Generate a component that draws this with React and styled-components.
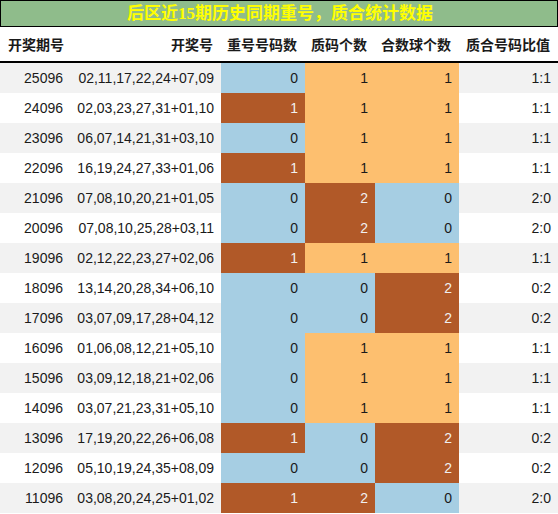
import React from "react";
import styled, { createGlobalStyle } from "styled-components";

const Global = createGlobalStyle`
  html, body { margin: 0; padding: 0; background: #fff; }
  body { width: 558px; }
`;

const Table = styled.div`
  width: 558px;
  font-family: "Liberation Sans", "Noto Sans CJK SC", sans-serif;
  color: #1a1a1a;
`;

const Title = styled.div`
  box-sizing: border-box;
  height: 27px;
  border: 1px solid #000;
  background: #8fbc8b;
  color: #ffff00;
  font-family: "Liberation Serif", "Noto Sans CJK SC", serif;
  font-weight: bold;
  font-size: 17px;
  line-height: 25px;
  text-align: center;
  padding-left: 2px;
`;

const cols = "70px 151px 84px 70px 84px 99px";

const HeaderRow = styled.div`
  display: grid;
  grid-template-columns: ${cols};
  height: 34px;
  border-bottom: 2px solid #000;
  font-family: "Noto Sans CJK SC", sans-serif;
  font-weight: bold;
  font-size: 14px;
  align-items: center;
`;

const HeadCell = styled.div`
  text-align: ${(p) => (p.$left ? "left" : "right")};
  padding: ${(p) => (p.$left ? "0 0 0 8px" : "0 8px 0 0")};
  white-space: nowrap;
`;

const Row = styled.div`
  display: grid;
  grid-template-columns: ${cols};
  height: 30px;
  background: ${(p) => (p.$alt ? "#f2f2f2" : "#ffffff")};
  font-size: 14px;
`;

const palette = {
  blue: { bg: "#a6cee3", fg: "#1a1a1a" },
  brown: { bg: "#b15928", fg: "#f0f0f0" },
  orange: { bg: "#fdbf6f", fg: "#1a1a1a" },
};

const Cell = styled.div`
  display: flex;
  align-items: center;
  justify-content: flex-end;
  padding-right: 7px;
  white-space: nowrap;
  background: ${(p) => (p.$tone ? palette[p.$tone].bg : "transparent")};
  color: ${(p) => (p.$tone ? palette[p.$tone].fg : "#1a1a1a")};
`;

const data = [
  ["25096", "02,11,17,22,24+07,09", 0, 1, 1, "1:1"],
  ["24096", "02,03,23,27,31+01,10", 1, 1, 1, "1:1"],
  ["23096", "06,07,14,21,31+03,10", 0, 1, 1, "1:1"],
  ["22096", "16,19,24,27,33+01,06", 1, 1, 1, "1:1"],
  ["21096", "07,08,10,20,21+01,05", 0, 2, 0, "2:0"],
  ["20096", "07,08,10,25,28+03,11", 0, 2, 0, "2:0"],
  ["19096", "02,12,22,23,27+02,06", 1, 1, 1, "1:1"],
  ["18096", "13,14,20,28,34+06,10", 0, 0, 2, "0:2"],
  ["17096", "03,07,09,17,28+04,12", 0, 0, 2, "0:2"],
  ["16096", "01,06,08,12,21+05,10", 0, 1, 1, "1:1"],
  ["15096", "03,09,12,18,21+02,06", 0, 1, 1, "1:1"],
  ["14096", "03,07,21,23,31+05,10", 0, 1, 1, "1:1"],
  ["13096", "17,19,20,22,26+06,08", 1, 0, 2, "0:2"],
  ["12096", "05,10,19,24,35+08,09", 0, 0, 2, "0:2"],
  ["11096", "03,08,20,24,25+01,02", 1, 2, 0, "2:0"],
];

const repeatTone = (v) => (v === 0 ? "blue" : "brown");
const countTone = (v) => (v === 0 ? "blue" : v === 1 ? "orange" : "brown");

export default function App() {
  return (
    <>
      <Global />
      <Table>
        <Title>后区近15期历史同期重号，质合统计数据</Title>
        <HeaderRow>
          <HeadCell $left>开奖期号</HeadCell>
          <HeadCell>开奖号</HeadCell>
          <HeadCell>重号号码数</HeadCell>
          <HeadCell>质码个数</HeadCell>
          <HeadCell>合数球个数</HeadCell>
          <HeadCell>质合号码比值</HeadCell>
        </HeaderRow>
        {data.map((r, i) => (
          <Row key={r[0]} $alt={i % 2 === 0}>
            <Cell>{r[0]}</Cell>
            <Cell>{r[1]}</Cell>
            <Cell $tone={repeatTone(r[2])}>{r[2]}</Cell>
            <Cell $tone={countTone(r[3])}>{r[3]}</Cell>
            <Cell $tone={countTone(r[4])}>{r[4]}</Cell>
            <Cell>{r[5]}</Cell>
          </Row>
        ))}
      </Table>
    </>
  );
}
